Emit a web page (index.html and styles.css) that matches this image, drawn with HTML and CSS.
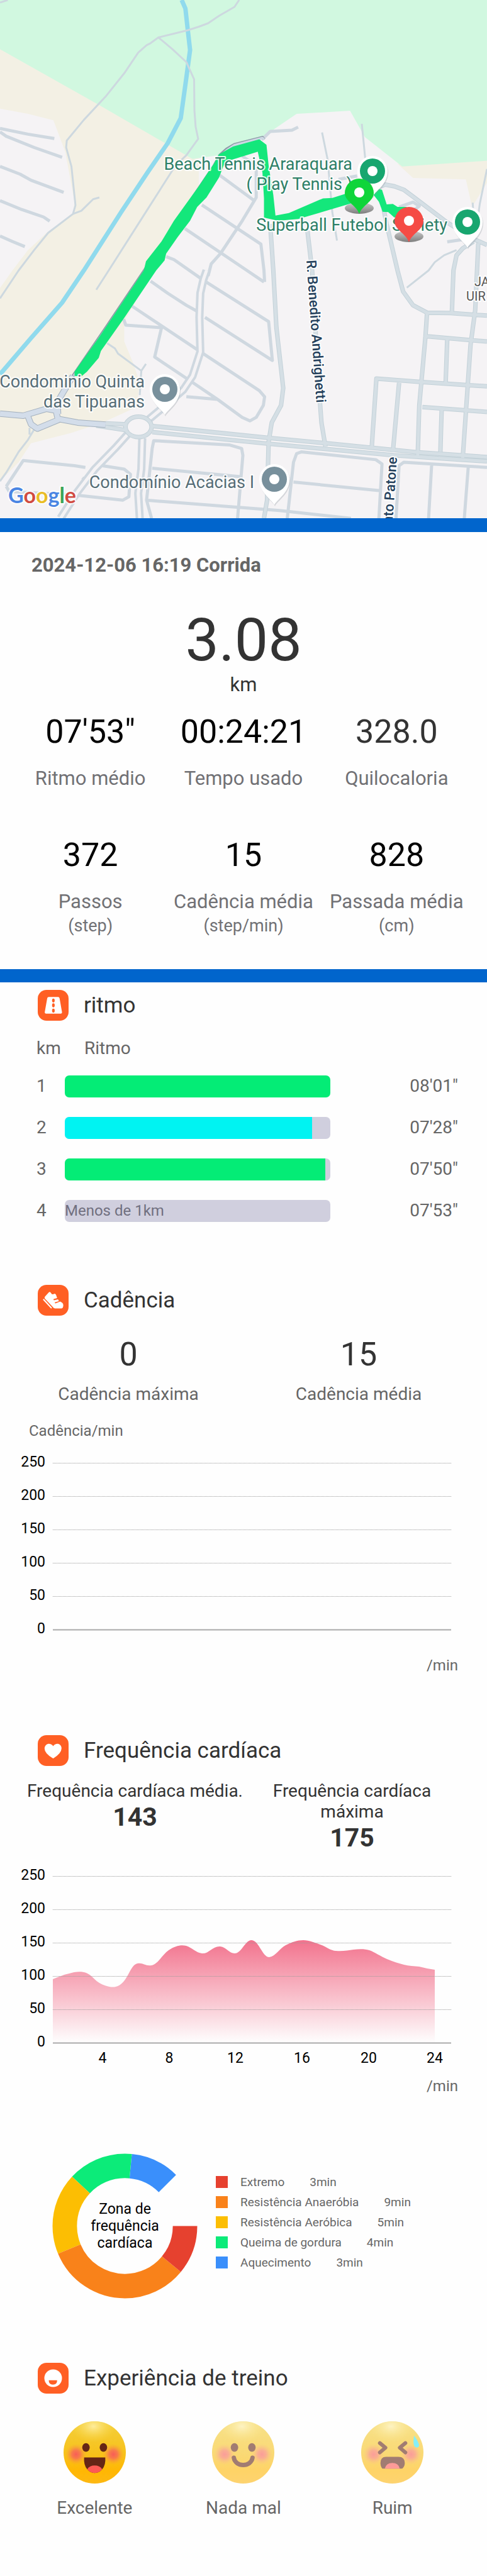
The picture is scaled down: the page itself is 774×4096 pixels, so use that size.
FILE: index.html
```html
<!DOCTYPE html>
<html lang="pt-BR">
<head>
<meta charset="utf-8">
<meta name="viewport" content="width=device-width, initial-scale=1">
<title>Corrida</title>
<link rel="stylesheet" href="styles.css">
</head>
<body>
<main class="report">
  <section class="map" aria-label="Mapa do percurso">
    <svg class="map-canvas" viewBox="0 0 774 824" role="img" aria-label="Percurso da corrida">
      <defs>
        <linearGradient id="shade" x1="0" y1="0" x2="0" y2="1"><stop offset="0" stop-color="#c9c9c9"/><stop offset="1" stop-color="#7d7d7d"/></linearGradient>
        <g id="poi"><path d="M0 41C-3 33-24 22-24 0a24 24 0 0 1 48 0C24 22 3 33 0 41Z" fill="#8a949a" opacity=".3" transform="translate(1 2)"/><path d="M0 41C-3 33-24 22-24 0a24 24 0 0 1 48 0C24 22 3 33 0 41Z" fill="#fff"/><circle r="20" fill="currentColor"/><circle r="8" fill="#fff"/></g>
        <g id="pin"><ellipse cy="25" rx="23" ry="9" fill="url(#shade)"/><path d="M0 34C-5 20-23 14-23 1a23 23 0 0 1 46 0C23 14 5 20 0 34Z" fill="currentColor"/><circle r="8" fill="#fff"/></g>
      </defs>
      <rect width="774" height="824" fill="#f5f3f5"/>
      <g class="shapes" transform="scale(.4936 .27425)">
        <path fill="#f3f0e4" d="M0 275 640 920 640 1100 490 1568 430 1770 400 1860 400 1980 430 2110 450 2220 440 2360 330 2450 230 2510 100 2570 60 2680 0 2790V1670L40 1568 90 1450 150 1350 235 1240 240 1170 210 880 172 697 90 660 0 630Z"/>
        <path fill="#f3f0e4" d="M1280 950 1568 925V1060L1520 1200 1500 1040 1330 1032Z"/>
        <path fill="#d1f8e0" d="M0 0H1568V932L1295 965 1175 795 1127 642 955 660 845 795 705 900 620 922 320 610 0 285Z"/>
        <path class="river" d="M585 0 597 50 605 180 612 290 600 450 582 685 540 830 475 1000 390 1230 270 1568 200 1755 100 1960 0 2170"/>
        <g class="trail">
          <path d="M0 15 25 0M770 0 755 40 705 92 670 135 640 155 605 175 510 217 485 250 472 262 445 305 400 425 340 560 270 695 215 815 213 855 230 965 243 1190 235 1240 155 1350 110 1450 60 1568 0 1730"/>
          <path d="M510 217 555 285 600 360 625 460 626 640 630 735 638 805 600 900 565 960 480 1200 350 1568 310 1680"/>
          <path d="M235 1240 262 1222 280 1190 300 1155 320 1145M345 1990 370 2020 380 2050 455 2150 470 2110M455 2150 450 2290M1568 980 1545 1180 1530 1370M1522 1175 1525 1260M1470 1450 1430 1480 1400 1520 1380 1568 1310 1668"/>
          <path d="M1037 768 1055 925 1070 1230 1085 1395M1165 718 1176 920M110 2490 90 2550 60 2620 20 2740 0 2790M95 2480V2520"/>
        </g>
        <g class="street">
          <path d="M0 745 90 778 175 803M0 765 20 790 110 855 200 912M0 965 65 1010 100 1045 205 1115M0 1163 70 1215 140 1258 160 1282M0 1368 40 1400 80 1430"/>
          <path d="M850 798 870 762 940 755 960 737M703 1010 820 1165M780 905 825 960 825 1145 780 1280 710 1470 680 1530 670 1600M650 1188 840 1415 850 1568 852 1635M595 1325 795 1568 850 1635M535 1488 560 1505 655 1625 865 1865 877 2090 660 1840"/>
          <path d="M485 1630 540 1700 600 1770 635 1805M425 1775 650 2045 835 2265 852 2300 848 2350 825 2420 805 2440 780 2420 700 2315 610 2205 498 2070 520 1900 405 1885 398 1850M600 2300 700 2315"/>
          <path d="M1285 1200 1330 1172 1350 1195 1335 1215 1310 1215M1440 1402 1530 1378M1090 1040 1150 1020"/>
          <path d="M20 2820 75 2670 240 2700 275 2710M330 2700 400 2720 420 2750 415 2880 395 2900 240 2870 30 2850 20 2820M470 2900 900 2960 1130 3005M488 3005 472 2900 490 2600 495 2555 740 2580 778 2600 782 2640 765 3005M490 2715 780 2765"/>
          <path d="M925 3005 945 2680 955 2630 970 2620 1210 2665 1230 2690 1220 3005M945 2795 1225 2845M1275 3005 1285 2700 1300 2680 1568 2710M1390 2690 1380 3005M1508 2700 1495 3005M265 2770 285 2800"/>
        </g>
        <g class="avenue-edge">
          <path d="M665 1568 655 1620 645 1700 642 1840 645 2040 620 2180 590 2260 540 2340 480 2430M410 2520 370 2600 305 2720 250 2850 195 3005M458 2540 455 2720 445 2860 450 3005"/>
        </g>
        <g class="avenue-gap">
          <path d="M665 1568 655 1620 645 1700 642 1840 645 2040 620 2180 590 2260 540 2340 480 2430M410 2520 370 2600 305 2720 250 2850 195 3005M458 2540 455 2720 445 2860 450 3005"/>
        </g>
        <g id="roads">
          <g class="road-edge">
            <path d="M870 1300 880 1568 890 1900 912 2250 905 2350 875 2450 865 2560 860 2900 850 3005M990 1340 1005 1568 1025 2200 1035 2450 1048 2590M1235 1210 1245 1300 1280 1568 1298 1690 1330 1770 1375 1813 1450 1815 1568 1830M1195 1110 1220 1085 1240 1070 1270 1080 1300 1100 1330 1140 1440 1290 1530 1390 1568 1420M1525 1400 1490 1440 1470 1480 1460 1568 1455 1810M1540 1410 1530 1800 1515 2000 1490 2655M1375 1813 1370 1950 1350 2350 1345 2640M1375 1950 1568 1980M1440 1965 1435 2220M1197 2590 1212 2195 1360 2215 1568 2240M1285 2220 1265 2620M1360 2360 1568 2388M1422 2375 1418 2620"/>
            <path d="M340 2455 410 2460M310 2468 410 2495M490 2470 870 2540 1050 2570 1340 2622 1568 2650M490 2505 860 2572 1270 2640 1568 2675"/>
            <ellipse cx="446" cy="2475" rx="42" ry="59"/>
          </g>
          <g class="road">
            <path d="M870 1300 880 1568 890 1900 912 2250 905 2350 875 2450 865 2560 860 2900 850 3005M990 1340 1005 1568 1025 2200 1035 2450 1048 2590M1235 1210 1245 1300 1280 1568 1298 1690 1330 1770 1375 1813 1450 1815 1568 1830M1195 1110 1220 1085 1240 1070 1270 1080 1300 1100 1330 1140 1440 1290 1530 1390 1568 1420M1525 1400 1490 1440 1470 1480 1460 1568 1455 1810M1540 1410 1530 1800 1515 2000 1490 2655M1375 1813 1370 1950 1350 2350 1345 2640M1375 1950 1568 1980M1440 1965 1435 2220M1197 2590 1212 2195 1360 2215 1568 2240M1285 2220 1265 2620M1360 2360 1568 2388M1422 2375 1418 2620"/>
            <path d="M340 2455 410 2460M310 2468 410 2495M490 2470 870 2540 1050 2570 1340 2622 1568 2650M490 2505 860 2572 1270 2640 1568 2675"/>
            <ellipse cx="446" cy="2475" rx="42" ry="59"/>
          </g>
        </g>
        <path class="highway-edge" d="M0 2398 75 2410 150 2370 180 2380 187 2435 120 2485 100 2460 90 2415M190 2430 250 2450 340 2462M187 2400 185 2330 235 2180"/>
        <path class="highway" d="M0 2398 75 2410 150 2370 180 2380 187 2435 120 2485 100 2460 90 2415M190 2430 250 2450 340 2462M187 2400 185 2330 235 2180"/>
        <path class="lane-edge" d="M850 810 845 797 755 838 730 865 708 900 690 960 600 1200 465 1568 345 1890 235 2180"/>
        <path class="lane" d="M850 810 845 800 755 842 733 868 711 903 693 960 603 1200 468 1568 348 1890 238 2180"/>
        <path fill="#14e77b" d="M240 2180V2155L318 1958 463 1568 470 1515 520 1400 560 1280 600 1180 640 1080 690 945 705 895 750 850 835 808 858 840 865 960 880 1130 887 1250 930 1235 1040 1150 1070 1148 1110 1125 1130 1110V1180L960 1270 895 1280 850 1262V1150L845 1000 830 880 740 930 720 960 705 1030 665 1145 635 1200 612 1280 572 1375 535 1470 530 1510 503 1568 402 1838 325 2035 318 2075 280 2155 262 2182Z"/>
        <path fill="#14e77b" d="M1205 1090 1230 1100 1245 1185 1265 1182 1280 1200H1310L1290 1250 1270 1262 1250 1230 1232 1228 1220 1170 1203 1130Z"/>
      </g>
      <g class="labels">
        <g class="poi-label green-label">
          <text x="560" y="270" text-anchor="end">Beach Tennis Araraquara</text>
          <text x="560" y="302" text-anchor="end">( Play Tennis )</text>
          <text x="711" y="367" text-anchor="end">Superball Futebol Society</text>
        </g>
        <g class="poi-label gray-label">
          <text x="230" y="616" text-anchor="end">Condominio Quinta</text>
          <text x="230" y="648" text-anchor="end">das Tipuanas</text>
          <text x="404" y="776" text-anchor="end">Condomínio Acácias I</text>
        </g>
        <g class="road-label">
          <text transform="translate(487 414) rotate(86)">R. Benedito Andrighetti</text>
          <text transform="translate(631 727) rotate(-86)" text-anchor="end">nto Patone</text>
        </g>
        <g class="area-label">
          <text x="754" y="455">JA</text>
          <text x="741" y="478">UIR</text>
        </g>
        <text class="google" x="13" y="800"><tspan fill="#4a85e3">G</tspan><tspan fill="#d14b41">o</tspan><tspan fill="#eabd27">o</tspan><tspan fill="#4a85e3">g</tspan><tspan fill="#3ca455">l</tspan><tspan fill="#d14b41">e</tspan></text>
      </g>
      <use href="#poi" x="592" y="272" color="#18a66f"/>
      <use href="#poi" x="743" y="353" color="#18a66f"/>
      <use href="#poi" x="262" y="619" color="#78909c"/>
      <use href="#poi" x="436" y="762" color="#78909c"/>
      <use href="#pin" x="571" y="306" color="#0fd53a"/>
      <use href="#pin" x="650" y="351" color="#f54b45"/>
    </svg>
  </section>

  <section class="summary">
    <h1 class="session">2024-12-06 16:19 Corrida</h1>
    <p class="distance">3.08</p>
    <p class="distance-unit">km</p>
    <dl class="stats">
      <div class="stat"><dd class="big">07'53"</dd><dt>Ritmo médio</dt></div>
      <div class="stat"><dd class="big">00:24:21</dd><dt>Tempo usado</dt></div>
      <div class="stat"><dd class="big soft">328.0</dd><dt>Quilocaloria</dt></div>
      <div class="stat"><dd class="big">372</dd><dt>Passos<small>(step)</small></dt></div>
      <div class="stat"><dd class="big">15</dd><dt>Cadência média<small>(step/min)</small></dt></div>
      <div class="stat"><dd class="big">828</dd><dt>Passada média<small>(cm)</small></dt></div>
    </dl>
  </section>

  <section class="pace">
    <h2 class="heading"><svg class="badge" viewBox="0 0 70 70" aria-hidden="true"><rect width="70" height="70" rx="20" fill="#ff5f24"/><path d="M25 16H46Q49 16 49.500 19L55 50Q55.500 54 52 54H19Q15.500 54 16 50L21.500 19Q22 16 25 16Z" fill="#fff"/><g fill="#ff5f24"><ellipse cx="35.500" cy="24" rx="3" ry="4.500"/><ellipse cx="35.500" cy="35" rx="3" ry="4.500"/><ellipse cx="35.500" cy="47" rx="3" ry="4.500"/></g></svg>ritmo</h2>
    <table class="pace-table">
      <thead><tr><th class="km" scope="col">km</th><th class="track-head" scope="col">Ritmo</th><th class="time"></th></tr></thead>
      <tbody>
        <tr><td class="km">1</td><td><div class="track"><div class="fill green" style="width:100%"></div></div></td><td class="time">08'01"</td></tr>
        <tr><td class="km">2</td><td><div class="track"><div class="fill cyan" style="width:93%"></div></div></td><td class="time">07'28"</td></tr>
        <tr><td class="km">3</td><td><div class="track"><div class="fill green" style="width:98%"></div></div></td><td class="time">07'50"</td></tr>
        <tr><td class="km">4</td><td><div class="track">Menos de 1km</div></td><td class="time">07'53"</td></tr>
      </tbody>
    </table>
  </section>

  <section class="cadence">
    <h2 class="heading"><svg class="badge" viewBox="0 0 70 70" aria-hidden="true"><rect width="70" height="70" rx="20" fill="#ff5f24"/><path d="M25 17Q27 15 29 17L32 21Q35 22 38 20Q41 20 42 24L44 30 36 32Q35 34 37 35L46 33 48 37 39 39.500Q38 41 40 42L51 38Q58 41 58 46 58 53 54 53.500H39Q36 53 34 50L16 31Q15 29 16 27Z" fill="#fff"/><path d="M13.500 33.500 30.500 52" stroke="#fff" stroke-width="3" stroke-linecap="round"/></svg>Cadência</h2>
    <dl class="cadence-stats">
      <div class="stat"><dd class="big soft">0</dd><dt>Cadência máxima</dt></div>
      <div class="stat"><dd class="big soft">15</dd><dt>Cadência média</dt></div>
    </dl>
    <p class="axis-title">Cadência/min</p>
    <svg class="chart" viewBox="0 0 774 300" role="img" aria-label="Cadência por minuto">
      <path class="grid" d="M84 20.500H717M84 73.500H717M84 126.500H717M84 179.500H717M84 232.500H717"/>
      <path class="axis" d="M84 285.500H717"/>
      <g class="ticks" text-anchor="end"><text x="72" y="26">250</text><text x="72" y="79">200</text><text x="72" y="132">150</text><text x="72" y="185">100</text><text x="72" y="238">50</text><text x="72" y="291">0</text></g>
    </svg>
    <p class="axis-unit">/min</p>
  </section>

  <section class="heart">
    <h2 class="heading"><svg class="badge" viewBox="0 0 70 70" aria-hidden="true"><rect width="70" height="70" rx="20" fill="#ff5f24"/><path d="M35 53Q15 41 15.500 30C16 19 29 16 35 25 41 16 54 19 54 30Q54 41 35 53Z" fill="#fff"/></svg>Frequência cardíaca</h2>
    <dl class="heart-stats">
      <div><dt>Frequência cardíaca média.</dt><dd>143</dd></div>
      <div><dt>Frequência cardíaca máxima</dt><dd>175</dd></div>
    </dl>
    <svg class="chart" viewBox="0 0 774 326" role="img" aria-label="Frequência cardíaca por minuto">
      <defs><linearGradient id="pulse" x1="0" y1="0" x2="0" y2="1"><stop offset="0" stop-color="#ef5071" stop-opacity=".8"/><stop offset="1" stop-color="#ef5071" stop-opacity="0"/></linearGradient></defs>
      <path d="M84 184C92 181 100 177 110 175 118 172 130 171 137 174 145 177 152 187 158 190 165 194 176 198 184 196 202 192 206 164 216 160 226 156 230 164 241 162 251 160 258 145 268 138 278 131 288 129 296 131 305 134 312 142 321 143 332 144 338 131 350 132 360 133 364 143 373 143 384 143 390 121 400 122 412 123 417 149 428 149 438 148 444 135 454 130 464 125 472 122 482 122 492 122 500 126 509 129 518 132 526 139 534 139 545 140 553 138 562 137 572 136 580 136 587 138 596 141 605 148 615 152 624 156 634 159 642 161 650 163 658 163 666 164 675 166 683 168 691 169V285H84Z" fill="url(#pulse)"/>
      <path class="grid" d="M84 20.500H717M84 73.500H717M84 126.500H717M84 179.500H717M84 232.500H717"/>
      <path class="axis" d="M84 285.500H717"/>
      <g class="ticks" text-anchor="end"><text x="72" y="26">250</text><text x="72" y="79">200</text><text x="72" y="132">150</text><text x="72" y="185">100</text><text x="72" y="238">50</text><text x="72" y="291">0</text></g>
      <g class="ticks" text-anchor="middle"><text x="163" y="317">4</text><text x="269" y="317">8</text><text x="374" y="317">12</text><text x="480" y="317">16</text><text x="586" y="317">20</text><text x="691" y="317">24</text></g>
    </svg>
    <p class="axis-unit">/min</p>
    <div class="zones">
      <div class="donut">
        <svg class="ring" viewBox="0 0 232 232" aria-hidden="true">
          <g fill="none" stroke-width="39">
            <circle cx="116" cy="116" r="96" pathLength="360" stroke="#3a8ffb" stroke-dasharray="39.4 360" stroke-dashoffset="-275.600"/>
            <circle cx="116" cy="116" r="96" pathLength="360" stroke="#0ceb79" stroke-dasharray="52.500 360" stroke-dashoffset="-223.100"/>
            <circle cx="116" cy="116" r="96" pathLength="360" stroke="#fcbe03" stroke-dasharray="65.600 360" stroke-dashoffset="-157.500"/>
            <circle cx="116" cy="116" r="96" pathLength="360" stroke="#f9821a" stroke-dasharray="118.100 360" stroke-dashoffset="-39.400"/>
            <circle cx="116" cy="116" r="96" pathLength="360" stroke="#e6412f" stroke-dasharray="39.400 360"/>
          </g>
        </svg>
        <p class="donut-title">Zona de frequência cardíaca</p>
      </div>
      <ul class="legend">
        <li><i class="swatch red"></i><span>Extremo</span><span>3min</span></li>
        <li><i class="swatch orange"></i><span>Resistência Anaeróbia</span><span>9min</span></li>
        <li><i class="swatch yellow"></i><span>Resistência Aeróbica</span><span>5min</span></li>
        <li><i class="swatch mint"></i><span>Queima de gordura</span><span>4min</span></li>
        <li><i class="swatch blue"></i><span>Aquecimento</span><span>3min</span></li>
      </ul>
    </div>
  </section>

  <section class="experience">
    <h2 class="heading"><svg class="badge" viewBox="0 0 70 70" aria-hidden="true"><rect width="70" height="70" rx="20" fill="#ff5f24"/><circle cx="35" cy="35" r="20" fill="#fff"/><path d="M25 39.500H44Q44 49.500 34.500 49.500 25 49.500 25 39.500Z" fill="#ff5f24"/></svg>Experiência de treino</h2>
    <svg width="0" height="0" class="defs" aria-hidden="true">
      <defs>
        <linearGradient id="skin" x1="0" y1="0" x2="0" y2="1"><stop offset="0" stop-color="#f3cf3c"/><stop offset=".5" stop-color="#f7c21c"/><stop offset=".8" stop-color="#ffb703"/><stop offset="1" stop-color="#fdb813"/></linearGradient>
        <radialGradient id="shine"><stop offset="0" stop-color="#fff0a8" stop-opacity=".9"/><stop offset="1" stop-color="#fbd84a" stop-opacity="0"/></radialGradient>
        <radialGradient id="blush"><stop offset="0" stop-color="#f8585a" stop-opacity=".95"/><stop offset=".4" stop-color="#f8645a" stop-opacity=".75"/><stop offset="1" stop-color="#f9a03a" stop-opacity="0"/></radialGradient>
        <clipPath id="face-clip"><circle cx="50" cy="50" r="50"/></clipPath>
        <g id="face"><circle cx="50" cy="50" r="50" fill="url(#skin)"/><g clip-path="url(#face-clip)"><ellipse cx="48" cy="8" rx="36" ry="26" fill="url(#shine)"/><circle cx="20" cy="53" r="17" fill="url(#blush)"/><circle cx="80" cy="53" r="17" fill="url(#blush)"/></g></g>
      </defs>
    </svg>
    <div class="moods">
      <button type="button" class="mood selected" aria-pressed="true"><svg class="emoji" viewBox="0 0 100 100" aria-hidden="true"><use href="#face"/><g fill="#652616"><ellipse cx="36" cy="42" rx="6" ry="7"/><ellipse cx="64" cy="42" rx="6" ry="7"/><path d="M33 58H67Q68 70 62 77 57 83 50 83 43 83 38 77 32 70 33 58Z"/></g><path d="M38 77Q42 71 50 71 58 71 62 77 57 83 50 83 43 83 38 77Z" fill="#fd5a55"/></svg>Excelente</button>
      <button type="button" class="mood" aria-pressed="false"><svg class="emoji" viewBox="0 0 100 100" aria-hidden="true"><use href="#face"/><ellipse cx="36" cy="42" rx="6" ry="7" fill="#652616"/><ellipse cx="64" cy="42" rx="6" ry="7" fill="#652616"/><path d="M35 58.500C37 74 63 74 65 58.500" fill="none" stroke="#652616" stroke-width="7" stroke-linecap="round"/></svg>Nada mal</button>
      <button type="button" class="mood" aria-pressed="false"><svg class="emoji" viewBox="0 0 100 100" aria-hidden="true"><use href="#face"/><path d="M30 35 39 42.500 30 50M71 35 62 42.500 71 50" fill="none" stroke="#652616" stroke-width="6" stroke-linecap="round" stroke-linejoin="round"/><path d="M40 57H60Q70 57 70 67 70 73 66 76H34Q31 73 31 67 31 57 40 57Z" fill="#652616"/><path d="M38 76Q40 67 50 67 60 67 62 76Z" fill="#fd5a55"/><path d="M85 23Q93 34 93 39 92 43 88 42 82 40 85 23Z" fill="#35e6f5"/></svg>Ruim</button>
    </div>
  </section>
</main>
</body>
</html>
```
FILE: styles.css
```css
* { box-sizing: border-box; }
body { margin: 0; background: #fefefe; color: #333; font-family: Roboto, "Noto Sans", sans-serif; }
h1, h2, p, dl, dd, dt, ul { margin: 0; padding: 0; }

/* Map */
.map { border-bottom: 22px solid #0165cc; }
.map-canvas, .chart, .ring { display: block; width: 100%; }
.shapes path, .shapes ellipse { vector-effect: non-scaling-stroke; }
.river, .trail, .street, .road, .road-edge, .avenue-edge, .avenue-gap, .lane, .lane-edge, .highway, .highway-edge { fill: none; stroke-linejoin: round; }
.river { stroke: #90daed; stroke-width: 7px; }
.trail { stroke: #cdd8df; stroke-width: 3px; }
.street { stroke: #cfd8e0; stroke-width: 5px; }
.avenue-edge { stroke: #cfd8e0; stroke-width: 13px; }
.avenue-gap { stroke: #f5f3f5; stroke-width: 5px; }
.road-edge { stroke: #c3d1d8; stroke-width: 7px; }
.road { stroke: #d5dfe5; stroke-width: 5px; }
.highway-edge { stroke: #a4b1be; stroke-width: 10px; }
.highway { stroke: #d3ddea; stroke-width: 8px; }
.lane-edge { stroke: #8d99a6; stroke-width: 5px; }
.lane { stroke: #cdd9e4; stroke-width: 4px; }
.labels text { paint-order: stroke; stroke: #fff; stroke-width: 4px; stroke-linejoin: round; stroke-opacity: .85; }
.poi-label { font-size: 27px; }
.green-label { fill: #2e8068; }
.gray-label { fill: #566d77; }
.road-label { font-size: 22px; font-weight: 500; fill: #24405c; }
.area-label { font-size: 20px; fill: #555; }
.google { font-family: Lato, sans-serif; font-size: 34px; font-weight: 700; }

/* Summary */
.summary { padding: 35px 22px 53px; border-bottom: 21px solid #0165cc; text-align: center; }
.session { padding-left: 28px; text-align: left; font-size: 31px; line-height: 36px; font-weight: 700; color: #666; }
.distance { margin-top: 51px; font-size: 95px; line-height: 100px; }
.distance-unit { margin-top: 3px; font-size: 31px; line-height: 36px; }
.stats { display: grid; grid-template-columns: repeat(3, 1fr); row-gap: 74px; margin-top: 27px; }
.stat { display: flex; flex-direction: column; gap: 26px; text-align: center; white-space: nowrap; }
.stat dt { font-size: 31px; line-height: 36px; color: #717175; }
.stat small { display: block; margin-top: 4px; font-size: 27px; line-height: 32px; }
.big { font-size: 52px; line-height: 60px; color: #000; }
.soft { color: #333; }

/* Section headings */
.heading { display: flex; align-items: center; gap: 24px; padding-left: 60px; font-size: 35px; line-height: 51px; height: 49px; font-weight: 400; color: #333; }
.badge { width: 49px; height: 49px; }

/* Pace */
.pace { padding: 12px 0 85px; }
.pace-table { width: calc(100% - 104px); margin: 27px 46px 0 58px; border-collapse: collapse; table-layout: fixed; font-size: 28px; color: #666; }
.pace-table th, .pace-table td { padding: 0; font-weight: 400; text-align: left; line-height: 34px; }
.pace-table th { height: 44px; vertical-align: top; }
.pace-table td { height: 66px; }
.pace-table .km { width: 45px; }
.pace-table .track-head { width: 63%; padding-left: 31px; }
.pace-table .time { text-align: right; }
.track { height: 35px; border-radius: 7px; overflow: hidden; background: #d0cfde; font-size: 24px; line-height: 35px; color: #717080; }
.fill { height: 100%; }
.green { background: #04ec76; }
.cyan { background: #00f3f2; }

/* Cadence */
.cadence-stats { display: grid; grid-template-columns: 1fr 1fr; margin-top: 32px; padding: 0 21px; }
.cadence-stats .stat { gap: 16px; }
.cadence-stats dt { font-size: 28px; line-height: 34px; color: #666; }
.axis-title { margin: 25px 0 15px 46px; font-size: 24px; line-height: 32px; color: #666; }
.grid { fill: none; stroke: #999; stroke-width: 1px; stroke-dasharray: 1 1; }
.axis { fill: none; stroke: #aaa; stroke-width: 2px; }
.ticks { font-size: 23px; fill: #000; }
.axis-unit { margin: 26px 46px 0 0; text-align: right; font-size: 24px; line-height: 32px; color: #666; }

/* Heart rate */
.heart { padding-top: 95px; }
.heart-stats { display: grid; grid-template-columns: 1fr 1fr; padding: 0 42px; margin: 23px 0 18px; text-align: center; }
.heart-stats dt { font-size: 28px; line-height: 33px; }
.heart-stats dd { margin-top: 2px; font-size: 41px; line-height: 46px; font-weight: 700; }
.heart .axis-unit { margin-top: 12px; }
.zones { display: flex; align-items: center; gap: 29px; margin: 91px 0 102px; padding-left: 83px; }
.donut { display: grid; place-items: center; width: 231px; }
.donut > * { grid-area: 1 / 1; }
.donut-title { width: 120px; text-align: center; font-size: 23px; line-height: 27px; color: #000; }
.legend { display: grid; gap: 13px; margin-bottom: 13px; list-style: none; font-size: 19px; line-height: 19px; color: #666; }
.legend li { display: flex; align-items: center; gap: 40px; }
.swatch { width: 19px; height: 19px; margin-right: -20px; }
.red { background: #e6412f; }
.orange { background: #f9821a; }
.yellow { background: #fcbe03; }
.mint { background: #0ceb79; }
.blue { background: #3a8ffb; }

/* Experience */
.defs { position: absolute; }
.experience { padding-bottom: 91px; }
.moods { display: grid; grid-template-columns: repeat(3, 1fr); margin-top: 44px; padding: 0 32px; }
.mood { display: flex; flex-direction: column; align-items: center; gap: 22px; padding: 0; border: 0; background: none; font: 28px/34px Roboto, "Noto Sans", sans-serif; color: #666; }
.emoji { width: 99px; height: 99px; opacity: .6; }
.selected .emoji { opacity: 1; }
```
